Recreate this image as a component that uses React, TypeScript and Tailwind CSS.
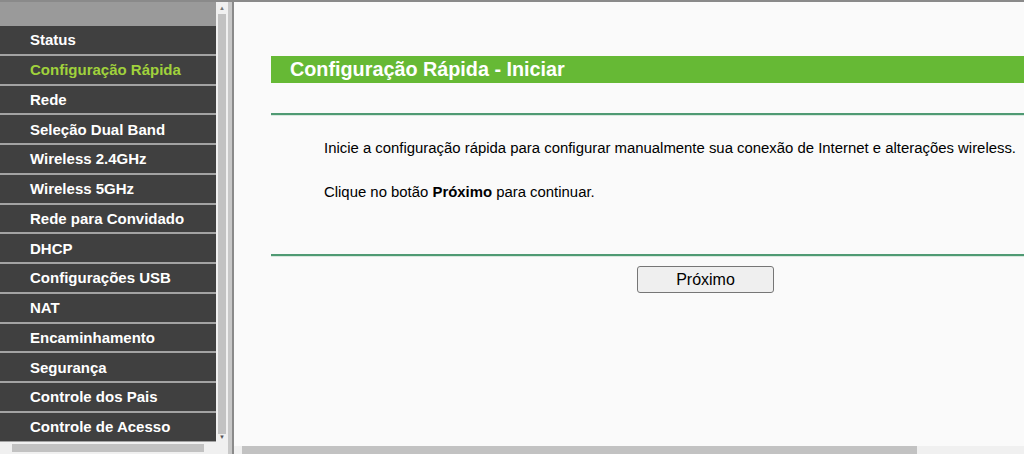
import React from 'react';

const menu = [
  'Status',
  'Configuração Rápida',
  'Rede',
  'Seleção Dual Band',
  'Wireless 2.4GHz',
  'Wireless 5GHz',
  'Rede para Convidado',
  'DHCP',
  'Configurações USB',
  'NAT',
  'Encaminhamento',
  'Segurança',
  'Controle dos Pais',
  'Controle de Acesso',
];

function Sidebar() {
  return (
    <div className="flex h-full w-[232px] shrink-0">
      <div className="flex w-[216px] flex-col">
        <div className="h-[24px] shrink-0 bg-[#9a9a9a]"></div>
        <div className="flex flex-col overflow-hidden">
          {menu.map((item, i) => (
            <div
              key={i}
              className="flex h-[29.75px] shrink-0 items-center border-b-2 border-[#a3a3a3] bg-[#404040] pl-[30px]"
            >
              <span
                className={`text-[15px] leading-[17px] font-bold ${i === 1 ? 'text-[#a0d23c]' : 'text-white'}`}
              >
                {item}
              </span>
            </div>
          ))}
        </div>
        <div className="flex-1 bg-[#404040]"></div>
        <div className="flex h-[12px] shrink-0 items-center bg-[#f0f0f0]">
          <div className="mx-[12px] h-[8px] flex-1 bg-[#c2c2c2]"></div>
        </div>
      </div>
      {/* vertical scrollbar */}
      <div className="flex w-[12px] flex-col items-center bg-[#f0f0f0] pt-[3px] pb-[14px]">
        <div className="text-[6px] leading-[6px] text-[#777]">▲</div>
        <div className="mt-[3px] w-[8px] flex-1 bg-[#c2c2c2]"></div>
        <div className="text-[6px] leading-[6px] text-[#555]">▼</div>
      </div>
      <div className="w-[4px] bg-[#c8c8c8]"></div>
    </div>
  );
}

function Content() {
  return (
    <div className="flex h-full min-w-0 flex-1 flex-col border-l-2 border-[#8a8a8a] bg-[#fafafa]">
      <div className="flex-1 overflow-hidden pl-[37px] pt-[54px]">
        <div className="flex h-[27px] items-center bg-[#66b935] pl-[19px]">
          <span className="text-[19.8px] leading-[23px] font-bold text-white">Configuração Rápida - Iniciar</span>
        </div>
        <div className="mt-[30px] h-[2px] bg-[#4f9a73]"></div>
        <div className="h-[1px] bg-[#d8e8de]"></div>
        <div className="pl-[53px] pt-[24px] text-[14.9px] leading-[17px] whitespace-nowrap text-black">
          <p>Inicie a configuração rápida para configurar manualmente sua conexão de Internet e alterações wireless.</p>
          <p className="mt-[27px]">
            Clique no botão <b>Próximo</b> para continuar.
          </p>
        </div>
        <div className="mt-[53px] h-[2px] bg-[#4f9a73]"></div>
        <div className="h-[1px] bg-[#d8e8de]"></div>
        <div className="mt-[9px] pl-[366px]">
          <button className="h-[27px] w-[137px] rounded-[3px] border border-[#767676] bg-[#efefef] text-[16px] leading-[18px] text-black">
            Próximo
          </button>
        </div>
      </div>
      {/* horizontal scrollbar */}
      <div className="flex h-[8px] shrink-0 items-center bg-[#f0f0f0]">
        <div className="ml-[8px] h-[8px] w-[675px] bg-[#c2c2c2]"></div>
      </div>
    </div>
  );
}

export default function App() {
  return (
    <div
      className="flex h-[454px] w-[1024px] overflow-hidden border-t-2 border-[#8a8a8a] bg-white"
      style={{ fontFamily: '"Liberation Sans", Arial, sans-serif' }}
    >
      <Sidebar />
      <Content />
    </div>
  );
}
